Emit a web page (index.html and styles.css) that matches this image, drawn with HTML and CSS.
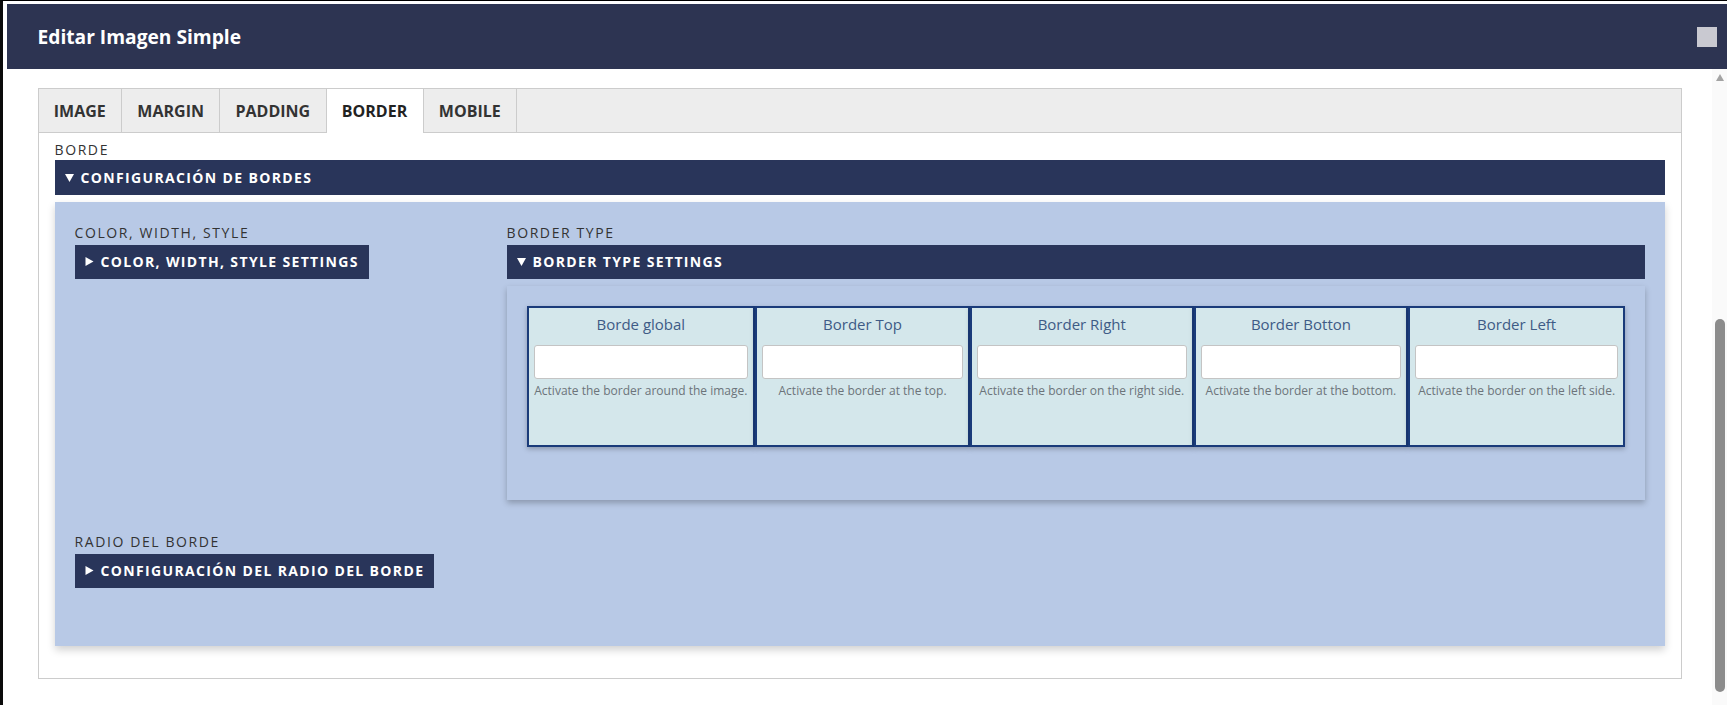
FILE: index.html
```html
<!DOCTYPE html>
<html lang="es">
<head>
<meta charset="utf-8">
<title>Editar Imagen Simple</title>
<link rel="stylesheet" href="styles.css">
</head>
<body>
<div class="modal">
  <header class="modal-header">
    <h1 class="modal-title">Editar Imagen Simple</h1>
    <span class="modal-close"></span>
  </header>
  <div class="modal-body">
    <div class="scroll-area">
      <div class="tabs">
        <nav class="tab-list">
          <span class="tab">IMAGE</span>
          <span class="tab">MARGIN</span>
          <span class="tab">PADDING</span>
          <span class="tab active">BORDER</span>
          <span class="tab">MOBILE</span>
        </nav>
        <div class="tab-panel">
          <div class="field-label">BORDE</div>
          <div class="bar bar-main">
            <svg class="tri" width="9" height="9" viewBox="0 0 9 9"><path d="M0 1 L9 1 L4.5 9 Z" fill="#fff"/></svg>
            <span>CONFIGURACIÓN DE BORDES</span>
          </div>
          <div class="blue-panel">
            <div class="row-grid">
              <div class="col">
                <div class="field-label">COLOR, WIDTH, STYLE</div>
                <div class="bar bar-btn">
                  <svg class="tri" width="9" height="9" viewBox="0 0 9 9"><path d="M0.5 0 L8.5 4.5 L0.5 9 Z" fill="#fff"/></svg>
                  <span>COLOR, WIDTH, STYLE SETTINGS</span>
                </div>
              </div>
              <div class="col">
                <div class="field-label">BORDER TYPE</div>
                <div class="bar">
                  <svg class="tri" width="9" height="9" viewBox="0 0 9 9"><path d="M0 1 L9 1 L4.5 9 Z" fill="#fff"/></svg>
                  <span>BORDER TYPE SETTINGS</span>
                </div>
                <div class="inner-panel">
                  <div class="cards">
                    <div class="card">
                      <div class="card-title">Borde global</div>
                      <input class="card-input" type="text">
                      <div class="card-help">Activate the border around the image.</div>
                    </div>
                    <div class="card">
                      <div class="card-title">Border Top</div>
                      <input class="card-input" type="text">
                      <div class="card-help">Activate the border at the top.</div>
                    </div>
                    <div class="card">
                      <div class="card-title">Border Right</div>
                      <input class="card-input" type="text">
                      <div class="card-help">Activate the border on the right side.</div>
                    </div>
                    <div class="card">
                      <div class="card-title">Border Botton</div>
                      <input class="card-input" type="text">
                      <div class="card-help">Activate the border at the bottom.</div>
                    </div>
                    <div class="card">
                      <div class="card-title">Border Left</div>
                      <input class="card-input" type="text">
                      <div class="card-help">Activate the border on the left side.</div>
                    </div>
                  </div>
                </div>
              </div>
            </div>
            <div class="row-radius">
              <div class="field-label">RADIO DEL BORDE</div>
              <div class="bar bar-btn">
                <svg class="tri" width="9" height="9" viewBox="0 0 9 9"><path d="M0.5 0 L8.5 4.5 L0.5 9 Z" fill="#fff"/></svg>
                <span>CONFIGURACIÓN DEL RADIO DEL BORDE</span>
              </div>
            </div>
          </div>
        </div>
      </div>
    </div>
    <div class="scrollbar">
      <span class="sb-arrow"></span>
      <span class="sb-thumb"></span>
    </div>
  </div>
</div>
</body>
</html>
```
FILE: styles.css
```css
* {
  box-sizing: border-box;
}

html, body {
  margin: 0;
  padding: 0;
}

body {
  height: 705px;
  overflow: hidden;
  background: #ffffff;
  border-left: 3px solid #0b0b0b;
  border-top: 1px solid #000000;
  font-family: "Open Sans", "Liberation Sans", sans-serif;
  color: #333333;
}

.modal {
  height: 100%;
  display: flex;
  flex-direction: column;
  padding: 3px 0 0 4px;
  background: #ffffff;
}

.modal-header {
  height: 65px;
  flex: none;
  background: #2d3452;
  display: flex;
  align-items: center;
  justify-content: space-between;
  padding: 0 10px 0 30.5px;
}

.modal-title {
  margin: 0;
  font-size: 19.2px;
  font-weight: 700;
  color: #ffffff;
  line-height: 24px;
}

.modal-close {
  width: 20px;
  height: 20px;
  background: #c9c9d1;
}

.modal-body {
  flex: 1;
  min-height: 0;
  display: flex;
}

.scroll-area {
  flex: 1;
  min-width: 0;
  padding: 19px 30px 0 30.5px;
}

.scrollbar {
  width: 15px;
  flex: none;
  background: #fafafa;
  display: flex;
  flex-direction: column;
  align-items: center;
}

.sb-arrow {
  margin-top: 5px;
  width: 0;
  height: 0;
  border-left: 4.5px solid transparent;
  border-right: 4.5px solid transparent;
  border-bottom: 7px solid #a3a3a3;
}

.sb-thumb {
  margin-top: auto;
  margin-bottom: 13px;
  width: 10px;
  height: 373px;
  border-radius: 5px;
  background: #8c8c8c;
}

/* Tabs */
.tabs {
  border: 1px solid #cccccc;
  background: #ffffff;
}

.tab-list {
  display: flex;
  height: 44px;
  background: #ededed;
  border-bottom: 1px solid #cccccc;
}

.tab {
  display: flex;
  align-items: center;
  height: 43px;
  padding: 0 15.3px;
  border-right: 1px solid #cccccc;
  font-size: 16px;
  font-weight: 700;
  color: #333333;
}

.tab.active {
  height: 44px;
  background: #ffffff;
  color: #222222;
  padding-bottom: 1px;
}

.tab-panel {
  padding: 7px 16px 32px 16px;
}

.field-label {
  font-size: 14px;
  line-height: 20px;
  letter-spacing: 1.6px;
  color: #333333;
  margin-bottom: 2px;
}

.tab-panel > .field-label {
  margin-bottom: 0;
}

.bar {
  display: flex;
  align-items: center;
  height: 34px;
  padding: 0 10px;
  background: #29355a;
  color: #ffffff;
  font-size: 14px;
  font-weight: 700;
  letter-spacing: 1.35px;
  white-space: nowrap;
}

.bar-main {
  height: 35px;
  padding-left: 10px;
}

.bar-btn {
  display: inline-flex;
}

.tri {
  flex: none;
  margin-right: 7px;
}

.blue-panel {
  margin-top: 6.5px;
  background: #b8c9e6;
  padding: 21px 20px 58.5px 20px;
  box-shadow: 0 4px 8px rgba(0, 0, 0, 0.18);
}

.row-grid {
  display: grid;
  grid-template-columns: 412px 1fr;
  column-gap: 20px;
}

.col {
  min-width: 0;
}

.inner-panel {
  margin-top: 7px;
  background: #b8c9e6;
  padding: 20px 20px 53px 20px;
  box-shadow: 0 3px 6px rgba(0, 0, 0, 0.25);
}

.cards {
  display: grid;
  grid-template-columns: 229fr 215fr 224fr 215fr 217fr;
}

.card {
  min-height: 141px;
  min-width: 0;
  background: #d4e7eb;
  border: 2px solid #1a3b7a;
  padding: 5px 5px;
  text-align: center;
  box-shadow: 0 2px 5px rgba(0, 0, 0, 0.25);
}

.card-title {
  font-size: 15px;
  line-height: 22px;
  color: #3e5b86;
  margin-bottom: 10px;
}

.card-input {
  display: block;
  width: 100%;
  height: 34px;
  margin: 0;
  border: 1px solid #c4c4c4;
  border-radius: 3px;
  background: #ffffff;
  font-family: inherit;
}

.card-help {
  margin-top: 3px;
  font-size: 12px;
  line-height: 18px;
  color: #6c747a;
  white-space: nowrap;
}

.row-radius {
  margin-top: 32px;
}
```
